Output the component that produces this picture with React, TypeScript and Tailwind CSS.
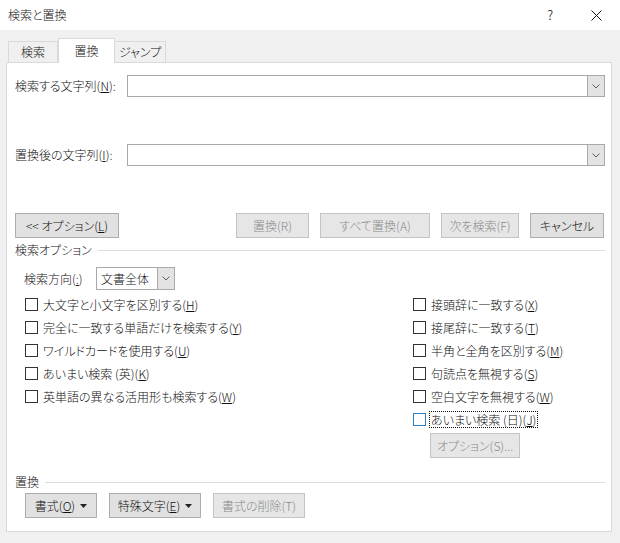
import React from "react";

const font =
  "[font-family:'Noto_Sans_CJK_JP','Noto_Sans',sans-serif] [font-feature-settings:'palt'] font-light";

function Chevron() {
  return (
    <svg width="8" height="5" viewBox="0 0 8 5" className="block">
      <path d="M0.5 0.5 L4 4 L7.5 0.5" fill="none" stroke="#5f5f5f" strokeWidth="1" />
    </svg>
  );
}

function Caret() {
  return (
    <svg width="7" height="4" viewBox="0 0 7 4" className="ml-[5px] block">
      <path d="M0 0 L7 0 L3.5 4 Z" fill="#222" />
    </svg>
  );
}

function Combo() {
  return (
    <div className="flex h-[22px] flex-1 border border-[#a9a9a9] bg-white">
      <div className="flex-1" />
      <div className="flex w-[17px] items-center justify-center border-l border-[#a9a9a9] bg-[#e3e3e3]">
        <Chevron />
      </div>
    </div>
  );
}

function Btn({
  w,
  disabled,
  children,
}: {
  w: string;
  disabled?: boolean;
  children: React.ReactNode;
}) {
  return (
    <div
      className={
        "flex h-[25px] items-center justify-center border text-[12px] " +
        w +
        (disabled
          ? " border-[#c4c4c4] bg-[#e6e6e6] text-[#8a8a8a]"
          : " border-[#adadad] bg-[#e1e1e1] text-[#111]")
      }
    >
      {children}
    </div>
  );
}

function Check({
  label,
  focused,
}: {
  label: React.ReactNode;
  focused?: boolean;
}) {
  return (
    <div className="flex h-[23px] items-center">
      <div
        className={
          "h-[13px] w-[13px] shrink-0 border bg-white " +
          (focused ? "border-[#2a7fc9]" : "border-[#333]")
        }
      />
      <span
        className={
          "ml-[4px] px-[1px] text-[12px] leading-[15px] text-[#111] " +
          (focused ? "outline outline-1 outline-dotted outline-[#111]" : "")
        }
      >
        {label}
      </span>
    </div>
  );
}

function GroupHeader({ title }: { title: string }) {
  return (
    <div className="flex h-[14px] items-center text-[12px] text-[#111]">
      <span>{title}</span>
      <div className="ml-[6px] h-px flex-1 bg-[#dcdcdc]" />
    </div>
  );
}

export default function App() {
  return (
    <div className={"flex h-[543px] w-[620px] flex-col bg-[#f0f0f0] text-[#111] " + font}>
      {/* title bar */}
      <div className="flex h-[30px] items-center bg-white pl-[8px]">
        <span className="text-[12px]">検索と置換</span>
        <span className="ml-auto mr-[38px] text-[13px]">?</span>
        <svg width="11" height="11" viewBox="0 0 11 11" className="mr-[18px]">
          <path d="M0.5 0.5 L10.5 10.5 M10.5 0.5 L0.5 10.5" stroke="#111" strokeWidth="1" />
        </svg>
      </div>

      {/* tabs */}
      <div className="mt-[8px] flex h-[24px] items-end pl-[8px]">
        <div className="flex h-[21px] w-[50px] items-center justify-center border border-b-0 border-[#d9d9d9] text-[12px]">
          検索
        </div>
        <div className="relative z-10 -mb-px flex h-[25px] w-[57px] items-center justify-center border border-b-0 border-[#d9d9d9] bg-white text-[12px]">
          置換
        </div>
        <div className="flex h-[21px] w-[51px] items-center justify-center border border-b-0 border-l-0 border-[#d9d9d9] text-[12px]">
          ジャンプ
        </div>
      </div>

      {/* panel */}
      <div className="ml-[6px] flex h-[470px] w-[606px] flex-col border border-[#d9d9d9] bg-white pl-[8px] pr-[6px] pt-[12px]">
        <div className="flex h-[22px] items-center">
          <span className="w-[112px] text-[12px]">
            検索する文字列(<u>N</u>):
          </span>
          <Combo />
        </div>

        <div className="mt-[47px] flex h-[22px] items-center">
          <span className="w-[112px] text-[12px]">
            置換後の文字列(<u>I</u>):
          </span>
          <Combo />
        </div>

        <div className="mt-[47px] flex h-[25px] items-center">
          <Btn w="w-[104px]">
            &lt;&lt; オプション(<u>L</u>)
          </Btn>
          <div className="ml-auto mr-[1px] flex gap-[11px]">
            <Btn w="w-[73px]" disabled>
              置換(R)
            </Btn>
            <Btn w="w-[110px]" disabled>
              すべて置換(A)
            </Btn>
            <Btn w="w-[78px]" disabled>
              次を検索(F)
            </Btn>
            <Btn w="w-[74px]">キャンセル</Btn>
          </div>
        </div>

        <div className="mt-[5px]">
          <GroupHeader title="検索オプション" />
        </div>

        <div className="mt-[10px] flex h-[23px] items-center pl-[9px]">
          <span className="w-[72px] text-[12px]">
            検索方向(<u>:</u>)
          </span>
          <div className="flex h-[23px] w-[79px] border border-[#a9a9a9] bg-white">
            <span className="flex flex-1 items-center pl-[4px] text-[12px]">文書全体</span>
            <div className="flex w-[17px] items-center justify-center border-l border-[#a9a9a9] bg-[#e3e3e3]">
              <Chevron />
            </div>
          </div>
        </div>

        <div className="mt-[3px] flex pl-[10px]">
          <div className="w-[388px]">
            <Check label={<>大文字と小文字を区別する(<u>H</u>)</>} />
            <Check label={<>完全に一致する単語だけを検索する(<u>Y</u>)</>} />
            <Check label={<>ワイルドカードを使用する(<u>U</u>)</>} />
            <Check label={<>あいまい検索 (英)(<u>K</u>)</>} />
            <Check label={<>英単語の異なる活用形も検索する(<u>W</u>)</>} />
          </div>
          <div className="flex flex-col">
            <Check label={<>接頭辞に一致する(<u>X</u>)</>} />
            <Check label={<>接尾辞に一致する(<u>T</u>)</>} />
            <Check label={<>半角と全角を区別する(<u>M</u>)</>} />
            <Check label={<>句読点を無視する(<u>S</u>)</>} />
            <Check label={<>空白文字を無視する(<u>W</u>)</>} />
            <Check label={<>あいまい検索 (日)(<u>J</u>)</>} focused />
            <div className="ml-[17px] mt-[2px]">
              <Btn w="w-[90px]" disabled>
                オプション(S)...
              </Btn>
            </div>
          </div>
        </div>

        <div className="mt-[17px]">
          <GroupHeader title="置換" />
        </div>

        <div className="mt-[4px] flex gap-[12px] pl-[10px]">
          <Btn w="w-[72px]">
            書式(<u>O</u>)
            <Caret />
          </Btn>
          <Btn w="w-[92px]">
            特殊文字(<u>E</u>)
            <Caret />
          </Btn>
          <Btn w="w-[92px]" disabled>
            書式の削除(T)
          </Btn>
        </div>
      </div>
    </div>
  );
}
